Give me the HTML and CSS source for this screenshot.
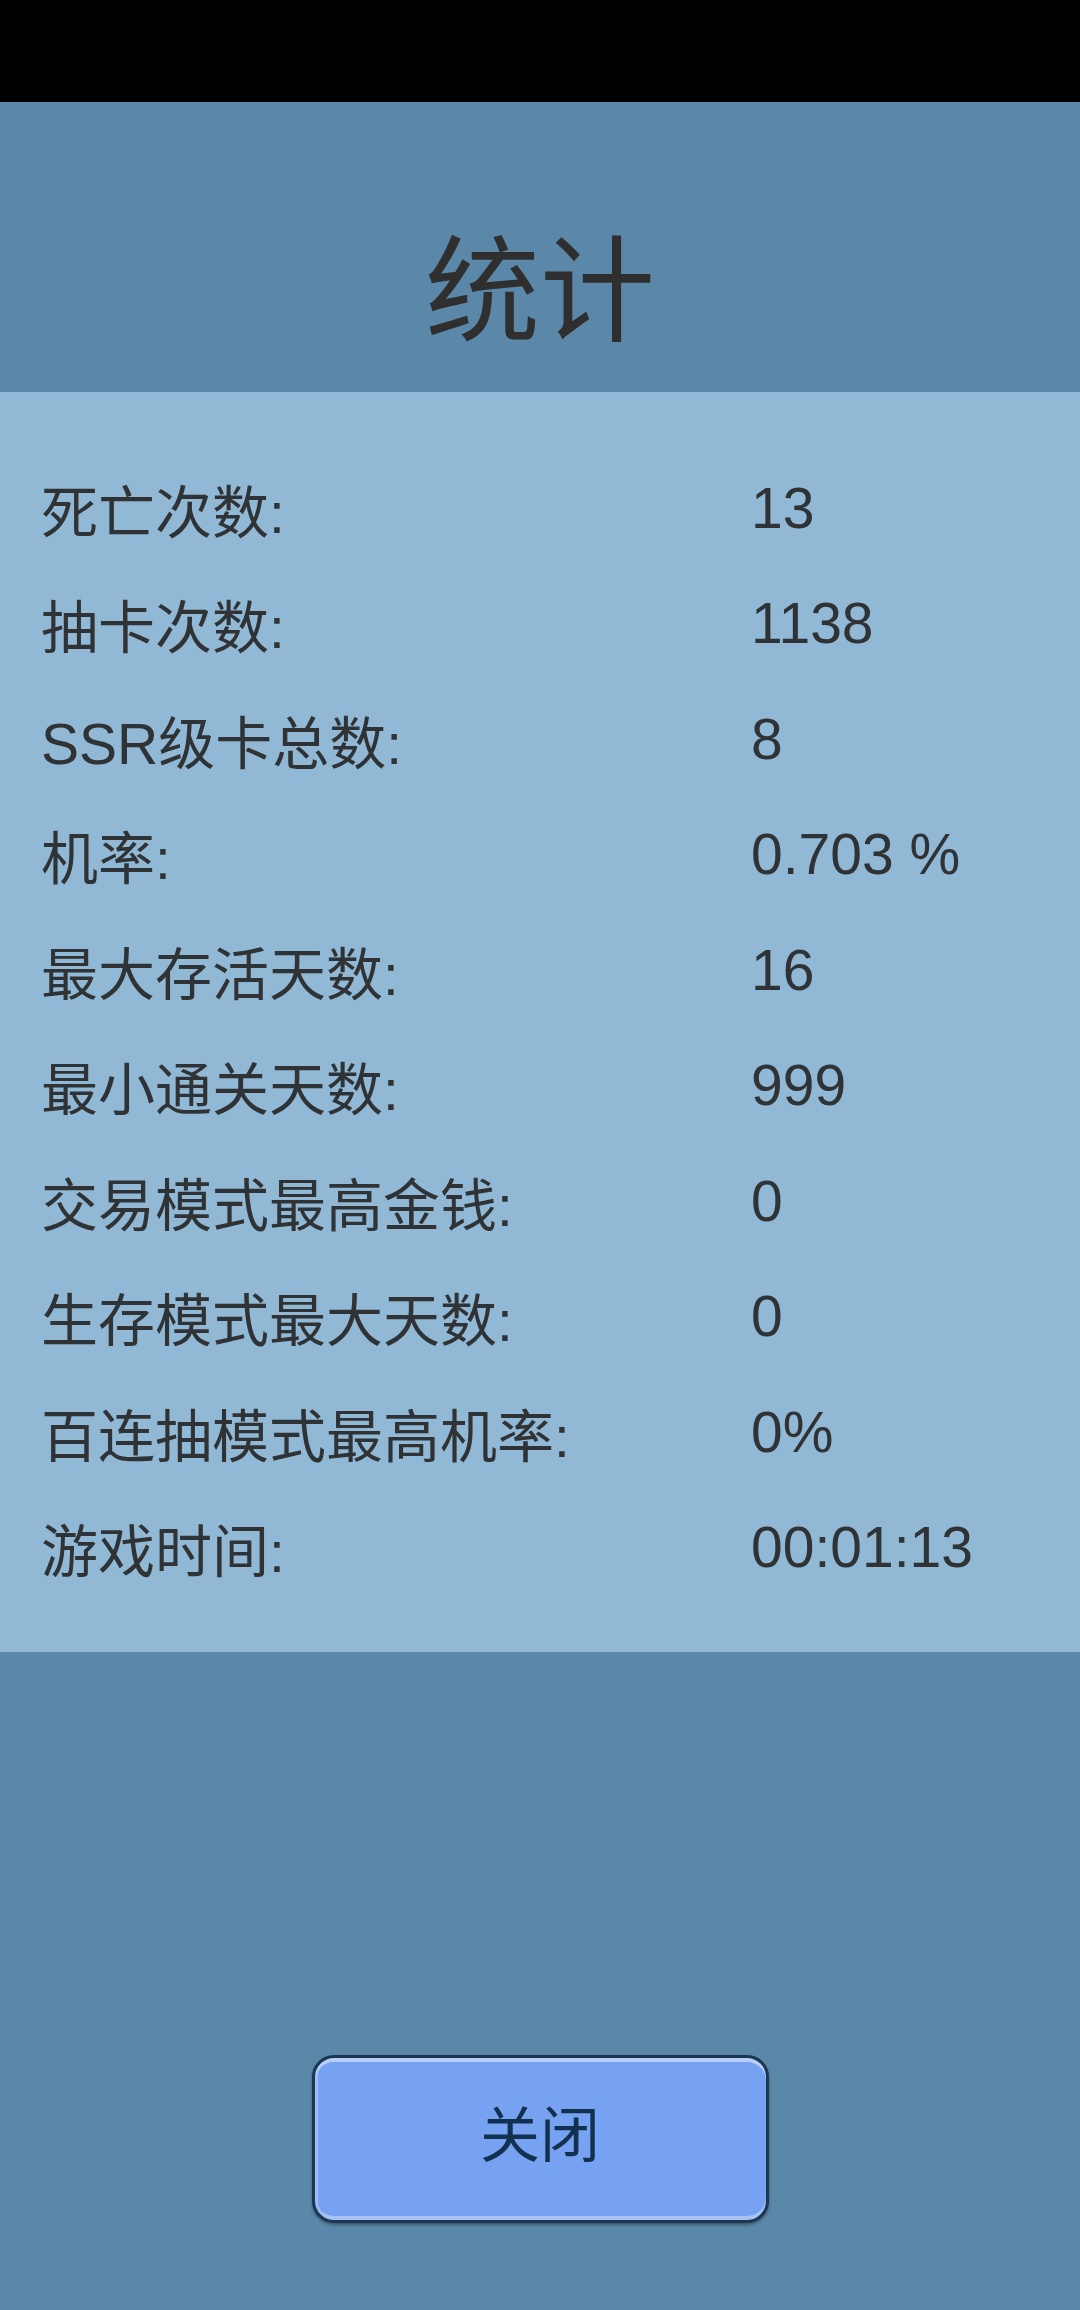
FILE: index.html
```html
<!DOCTYPE html>
<html lang="zh-CN">
<head>
    <meta charset="UTF-8">
    <title>统计</title>
    <link rel="stylesheet" href="styles.css">
</head>
<body>
    <div id="ekran">
        <div class="pasek"></div>

        <div class="naglowek">
            <h1 class="tytul">统计</h1>
        </div>

        <div class="panel">
            <div class="wiersz"><span>死亡次数:</span><span>13</span></div>
            <div class="wiersz"><span>抽卡次数:</span><span>1138</span></div>
            <div class="wiersz"><span>SSR级卡总数:</span><span>8</span></div>
            <div class="wiersz"><span>机率:</span><span>0.703 %</span></div>
            <div class="wiersz"><span>最大存活天数:</span><span>16</span></div>
            <div class="wiersz"><span>最小通关天数:</span><span>999</span></div>
            <div class="wiersz"><span>交易模式最高金钱:</span><span>0</span></div>
            <div class="wiersz"><span>生存模式最大天数:</span><span>0</span></div>
            <div class="wiersz"><span>百连抽模式最高机率:</span><span>0%</span></div>
            <div class="wiersz"><span>游戏时间:</span><span>00:01:13</span></div>
        </div>

        <div class="stopka">
            <div class="zamknij">关闭</div>
        </div>
    </div>
</body>
</html>
```

FILE: styles.css
```css
*{
    margin: 0;
    padding: 0;
    box-sizing: border-box;
    font-family: "Liberation Sans", "Noto Sans CJK SC", sans-serif;
}
body{
    background-color: #5b88a8;
}
#ekran{
    display: flex;
    flex-direction: column;
    width: 1080px;
    height: 2310px;
}
.pasek{
    height: 102px;
    background-color: #000;
}
.naglowek{
    height: 290px;
    padding-top: 123px;
    text-align: center;
}
.tytul{
    font-size: 115px;
    font-weight: normal;
    line-height: 1;
    color: #2f2f2f;
    font-family: "Noto Sans CJK SC", sans-serif;
}

.panel{
    background-color: #91b8d4;
    padding: 58px 0 47px 41px;
}
.wiersz{
    display: grid;
    grid-template-columns: 710px 1fr;
    align-items: center;
    height: 115.5px;
    font-size: 57px;
    color: #303336;
}

.stopka{
    flex: 1;
    display: flex;
    justify-content: center;
    align-items: flex-end;
    padding-bottom: 87px;
}
.zamknij{
    width: 457px;
    height: 168px;
    display: flex;
    justify-content: center;
    align-items: center;
    padding-bottom: 18px;
    font-size: 60px;
    color: #12304f;
    background-color: #77a2f1;
    border: 3px solid #1d3752;
    border-radius: 22px;
    box-shadow: inset 0 4px 0 #b7cff6, inset 3px 0 0 #9dbcf4, inset 0 -4px 0 #a9c4f3, 0 2px 3px rgba(0, 0, 0, 0.35);
}
```
